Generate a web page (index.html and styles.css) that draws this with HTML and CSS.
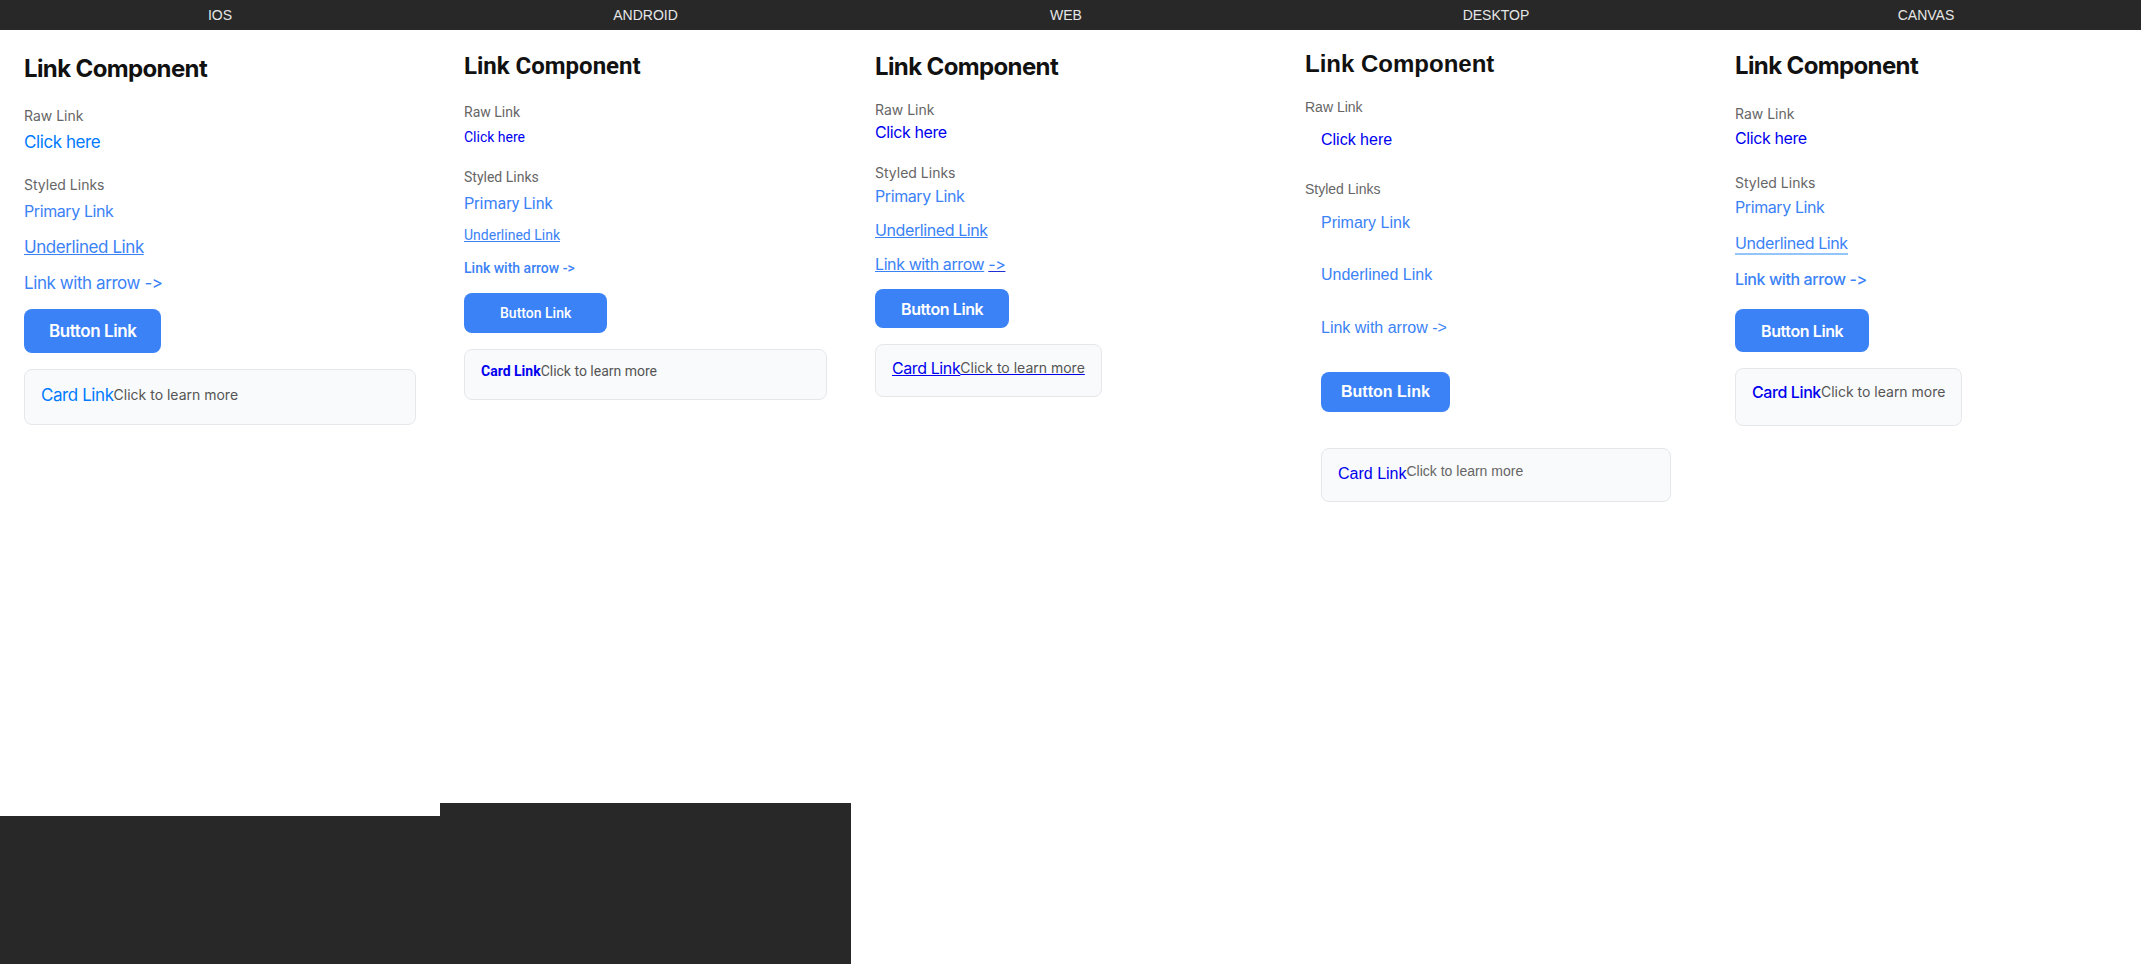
FILE: index.html
```html
<!DOCTYPE html>
<html lang="en">
<head>
<meta charset="utf-8">
<title>Link Component</title>
<link rel="stylesheet" href="styles.css">
</head>
<body>
<main class="panes">
  <section class="pane pane-ios">
    <div class="pane-label">IOS</div>
    <div class="frame">
      <h1 class="lc-title">Link Component</h1>
      <div class="lc-section lc-raw-section">
        <div class="lc-label">Raw Link</div>
        <a class="lc-raw" href="#">Click here</a>
      </div>
      <div class="lc-section lc-styled-section">
        <div class="lc-label">Styled Links</div>
        <a class="lc-primary" href="#">Primary Link</a>
        <a class="lc-underlined" href="#">Underlined Link</a>
        <a class="lc-arrow" href="#">Link with arrow -&gt;</a>
        <a class="lc-button" href="#">Button Link</a>
        <a class="lc-card" href="#"><span class="lc-card-title">Card Link</span><span class="lc-card-desc">Click to learn more</span></a>
      </div>
    </div>
  </section>

  <section class="pane pane-android">
    <div class="pane-label">ANDROID</div>
    <div class="frame">
      <h1 class="lc-title">Link Component</h1>
      <div class="lc-section lc-raw-section">
        <div class="lc-label">Raw Link</div>
        <a class="lc-raw" href="#">Click here</a>
      </div>
      <div class="lc-section lc-styled-section">
        <div class="lc-label">Styled Links</div>
        <a class="lc-primary" href="#">Primary Link</a>
        <a class="lc-underlined" href="#">Underlined Link</a>
        <a class="lc-arrow" href="#">Link with arrow -&gt;</a>
        <a class="lc-button" href="#">Button Link</a>
        <a class="lc-card" href="#"><span class="lc-card-title">Card Link</span><span class="lc-card-desc">Click to learn more</span></a>
      </div>
    </div>
  </section>

  <section class="pane pane-web">
    <div class="pane-label">WEB</div>
    <div class="frame">
      <h1 class="lc-title">Link Component</h1>
      <div class="lc-section lc-raw-section">
        <div class="lc-label">Raw Link</div>
        <a class="lc-raw" href="#">Click here</a>
      </div>
      <div class="lc-section lc-styled-section">
        <div class="lc-label">Styled Links</div>
        <a class="lc-primary" href="#">Primary Link</a>
        <a class="lc-underlined" href="#">Underlined Link</a>
        <a class="lc-arrow" href="#"><span class="lc-arrow-text">Link with arrow</span><span class="lc-arrow-icon">-&gt;</span></a>
        <a class="lc-button" href="#">Button Link</a>
        <a class="lc-card" href="#"><span class="lc-card-title">Card Link</span><span class="lc-card-desc">Click to learn more</span></a>
      </div>
    </div>
  </section>

  <section class="pane pane-desktop">
    <div class="pane-label">DESKTOP</div>
    <div class="frame">
      <h1 class="lc-title">Link Component</h1>
      <div class="lc-section lc-raw-section">
        <div class="lc-label">Raw Link</div>
        <a class="lc-raw" href="#">Click here</a>
      </div>
      <div class="lc-section lc-styled-section">
        <div class="lc-label">Styled Links</div>
        <a class="lc-primary" href="#">Primary Link</a>
        <a class="lc-underlined" href="#">Underlined Link</a>
        <a class="lc-arrow" href="#">Link with arrow -&gt;</a>
        <a class="lc-button" href="#">Button Link</a>
        <a class="lc-card" href="#"><span class="lc-card-title">Card Link</span><span class="lc-card-desc">Click to learn more</span></a>
      </div>
    </div>
  </section>

  <section class="pane pane-canvas">
    <div class="pane-label">CANVAS</div>
    <div class="frame">
      <h1 class="lc-title">Link Component</h1>
      <div class="lc-section lc-raw-section">
        <div class="lc-label">Raw Link</div>
        <a class="lc-raw" href="#">Click here</a>
      </div>
      <div class="lc-section lc-styled-section">
        <div class="lc-label">Styled Links</div>
        <a class="lc-primary" href="#">Primary Link</a>
        <a class="lc-underlined" href="#">Underlined Link</a>
        <a class="lc-arrow" href="#">Link with arrow -&gt;</a>
        <a class="lc-button" href="#">Button Link</a>
        <a class="lc-card" href="#"><span class="lc-card-title">Card Link</span><span class="lc-card-desc">Click to learn more</span></a>
      </div>
    </div>
  </section>
</main>
</body>
</html>
```
FILE: styles.css
```css
* { box-sizing: border-box; }

html, body {
  margin: 0;
  padding: 0;
  background: #282828;
}

.panes {
  display: flex;
  height: 964px;
  overflow: hidden;
}

.pane {
  display: flex;
  flex-direction: column;
  min-width: 0;
}

.pane-ios { flex: 0 0 440px; }
.pane-android { flex: 0 0 411px; }
.pane-web, .pane-desktop, .pane-canvas { flex: 1 1 0; }

.pane-label {
  height: 30px;
  text-align: center;
  color: #e6e6e6;
  font: 14px/30px "Liberation Sans", Arial, sans-serif;
  flex: none;
}

.frame {
  background: #ffffff;
  display: flex;
  flex-direction: column;
  align-items: stretch;
  font-feature-settings: "calt" 0, "liga" 0;
  font-variant-ligatures: none;
}

.pane-ios .frame { height: 786px; padding: 24px 24px; }
.pane-android .frame { height: 773px; padding: 22px 24px; }
.pane-web .frame { flex: 1; padding: 22px 24px; }
.pane-desktop .frame { flex: 1; padding: 20px 24px; }
.pane-canvas .frame { flex: 1; padding: 21px 24px; }

.lc-title {
  margin: 0;
  font-weight: 700;
  color: #111111;
}

.lc-section {
  display: flex;
  flex-direction: column;
  align-items: flex-start;
}

.lc-label {
  color: #666666;
}

.frame a { text-decoration: none; }

.lc-primary, .lc-underlined, .lc-arrow { color: #3b82f6; }
.lc-raw { color: #0000ee; }

.lc-underlined { text-decoration: underline !important; }

.lc-button {
  display: inline-flex;
  align-items: center;
  justify-content: center;
  background: #3b82f6;
  color: #ffffff;
  border-radius: 8px;
}

.lc-card {
  display: flex;
  align-items: flex-start;
  background: #f9fafb;
  border: 1px solid #e5e7eb;
  border-radius: 8px;
}

.lc-card-title { color: #0000ee; }
.lc-card-desc { color: #555555; }

/* Inter panes: tighten larger text to match the reference metrics */
.pane-ios .frame,
.pane-web .frame,
.pane-canvas .frame { font-family: Inter, "Noto Sans", sans-serif; }

.pane-ios .lc-title,
.pane-web .lc-title,
.pane-canvas .lc-title { letter-spacing: -0.026em; }

.pane-ios .lc-raw, .pane-ios .lc-primary, .pane-ios .lc-underlined, .pane-ios .lc-arrow,
.pane-ios .lc-button, .pane-ios .lc-card-title,
.pane-web .lc-raw, .pane-web .lc-primary, .pane-web .lc-underlined, .pane-web .lc-arrow,
.pane-web .lc-button, .pane-web .lc-card-title,
.pane-canvas .lc-raw, .pane-canvas .lc-primary, .pane-canvas .lc-underlined, .pane-canvas .lc-arrow,
.pane-canvas .lc-button, .pane-canvas .lc-card-title { letter-spacing: -0.025em; }

/* ---------- iOS ---------- */
.pane-ios .lc-title { font-size: 24px; line-height: 29px; }
.pane-ios .lc-section { margin-top: 24px; }
.pane-ios .lc-label { font-size: 14px; line-height: 17px; }
.pane-ios .lc-raw { margin-top: 8px; font-size: 17px; line-height: 20px; color: #007aff; }
.pane-ios .lc-primary { margin-top: 8px; font-size: 16px; line-height: 20px; }
.pane-ios .lc-underlined,
.pane-ios .lc-arrow { margin-top: 16px; font-size: 17px; line-height: 20px; }
.pane-ios .lc-button { margin-top: 16px; height: 44px; padding: 0 25px; font-size: 17px; font-weight: 600; }
.pane-ios .lc-card { margin-top: 16px; align-self: stretch; padding: 15px 16px 19px; }
.pane-ios .lc-card-title { font-size: 17px; line-height: 20px; color: #007aff; }
.pane-ios .lc-card-desc { font-size: 14px; line-height: 17px; margin-top: 1px; }

/* ---------- Android ---------- */
.pane-android .frame { font-family: Roboto, "Noto Sans", sans-serif; }
.pane-android .lc-title { font-size: 24px; line-height: 28px; }
.pane-android .lc-raw-section { margin-top: 24px; }
.pane-android .lc-styled-section { margin-top: 23px; }
.pane-android .lc-label { font-size: 14px; line-height: 17px; }
.pane-android .lc-raw { margin-top: 8px; font-size: 14px; line-height: 17px; }
.pane-android .lc-primary { margin-top: 8px; font-size: 16px; line-height: 19px; }
.pane-android .lc-underlined { margin-top: 14px; font-size: 14px; line-height: 17px; }
.pane-android .lc-arrow { margin-top: 16px; font-size: 14px; line-height: 17px; font-weight: 500; }
.pane-android .lc-button { margin-top: 16px; height: 40px; padding: 0 36px; font-size: 14px; font-weight: 500; }
.pane-android .lc-card { margin-top: 16px; align-self: stretch; padding: 13px 16px 19px; }
.pane-android .lc-card-title { font-size: 14px; line-height: 17px; font-weight: 700; }
.pane-android .lc-card-desc { font-size: 14px; line-height: 17px; }

/* ---------- Web ---------- */
.pane-web .lc-title { font-size: 24px; line-height: 29px; }
.pane-web .lc-raw-section { margin-top: 20px; }
.pane-web .lc-styled-section { margin-top: 22px; }
.pane-web .lc-label { font-size: 14px; line-height: 17px; }
.pane-web .lc-raw { margin-top: 5px; font-size: 16px; line-height: 19px; }
.pane-web .lc-primary,
.pane-web .lc-underlined,
.pane-web .lc-arrow { font-size: 16px; line-height: 19px; }
.pane-web .lc-primary { margin-top: 6px; }
.pane-web .lc-underlined { margin-top: 15px; }
.pane-web .lc-arrow { margin-top: 15px; display: inline-flex; gap: 4px; }
.pane-web .lc-arrow-text,
.pane-web .lc-arrow-icon { text-decoration: underline; }
.pane-web .lc-arrow-icon { text-decoration-color: #1f2fd8; }
.pane-web .lc-button { margin-top: 15px; height: 39px; padding: 0 26px; font-size: 16px; font-weight: 600; }
.pane-web .lc-card { margin-top: 16px; padding: 14px 16px 18px; }
.pane-web .lc-card-title { font-size: 16px; line-height: 19px; text-decoration: underline; }
.pane-web .lc-card-desc { font-size: 14px; line-height: 17px; text-decoration: underline; text-decoration-color: #0000ee; }

/* ---------- Desktop ---------- */
.pane-desktop .frame { font-family: "Liberation Sans", Arial, sans-serif; }
.pane-desktop .lc-title { font-size: 24px; line-height: 28px; }
.pane-desktop .lc-raw-section { margin-top: 21px; }
.pane-desktop .lc-styled-section { margin-top: 24px; }
.pane-desktop .lc-label { font-size: 14px; line-height: 16px; }
.pane-desktop .lc-raw { margin-top: 8px; padding: 8px 16px; font-size: 16px; line-height: 18px; }
.pane-desktop .lc-primary,
.pane-desktop .lc-underlined,
.pane-desktop .lc-arrow { font-size: 16px; line-height: 18px; margin-left: 16px; }
.pane-desktop .lc-underlined { text-decoration: none !important; }
.pane-desktop .lc-primary { margin-top: 17px; }
.pane-desktop .lc-underlined { margin-top: 34px; }
.pane-desktop .lc-arrow { margin-top: 35px; }
.pane-desktop .lc-button { margin: 35px 0 0 16px; height: 40px; padding: 0 20px; font-size: 16px; font-weight: 700; }
.pane-desktop .lc-card { margin: 36px 16px 0; align-self: stretch; padding: 14px 16px 16px; }
.pane-desktop .lc-card-title { font-size: 16px; line-height: 22px; }
.pane-desktop .lc-card-desc { font-size: 14px; line-height: 16px; color: #666666; }

/* ---------- Canvas ---------- */
.pane-canvas .lc-title { font-size: 24px; line-height: 29px; }
.pane-canvas .lc-raw-section { margin-top: 25px; }
.pane-canvas .lc-styled-section { margin-top: 26px; }
.pane-canvas .lc-label { font-size: 14px; line-height: 17px; }
.pane-canvas .lc-raw { margin-top: 7px; font-size: 16px; line-height: 19px; }
.pane-canvas .lc-primary,
.pane-canvas .lc-underlined,
.pane-canvas .lc-arrow { font-size: 16px; line-height: 19px; }
.pane-canvas .lc-primary { margin-top: 7px; }
.pane-canvas .lc-underlined { margin-top: 17px; text-decoration: none !important; border-bottom: 2px solid #93c5fd; }
.pane-canvas .lc-arrow { margin-top: 15px; font-weight: 500; }
.pane-canvas .lc-button { margin-top: 20px; height: 43px; padding: 0 26px; font-size: 16px; font-weight: 600; }
.pane-canvas .lc-card { margin-top: 16px; padding: 14px 16px 23px; }
.pane-canvas .lc-card-title { font-size: 16px; line-height: 19px; font-weight: 500; }
.pane-canvas .lc-card-desc { font-size: 14px; line-height: 17px; }
```
